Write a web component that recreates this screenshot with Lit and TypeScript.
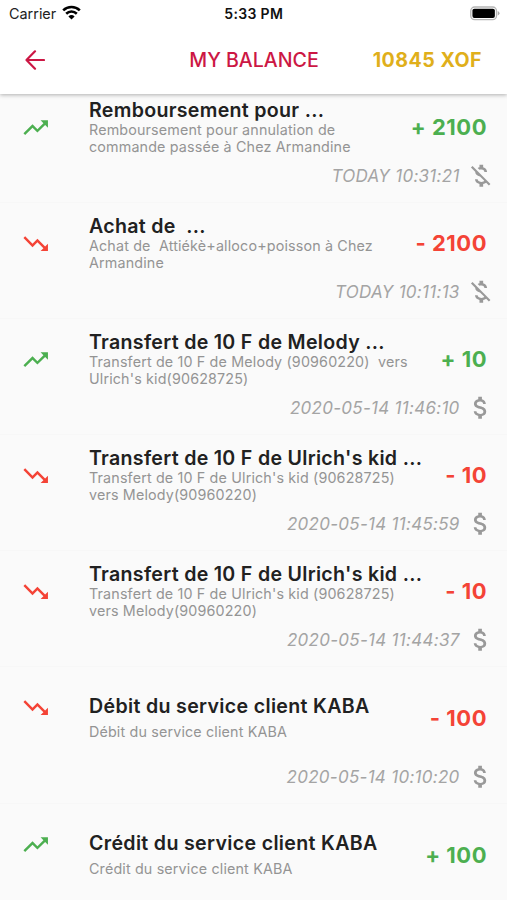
import { LitElement, html, css, svg } from "lit";
import { customElement } from "lit/decorators.js";
import { classMap } from "lit/directives/class-map.js";

interface Transaction {
  title: string;
  lines: string[];
  amount: string;
  credit: boolean;
  date?: string;
  free?: boolean;
  roomy?: boolean;
}

const transactions: Transaction[] = [
  { title: "Remboursement pour ...", lines: ["Remboursement pour annulation de", "commande passée à Chez Armandine"], amount: "+ 2100", credit: true, date: "TODAY 10:31:21", free: true },
  { title: "Achat de  ...", lines: ["Achat de  Attiékè+alloco+poisson à Chez", "Armandine"], amount: "- 2100", credit: false, date: "TODAY 10:11:13", free: true },
  { title: "Transfert de 10 F de Melody ...", lines: ["Transfert de 10 F de Melody (90960220)  vers", "Ulrich's kid(90628725)"], amount: "+ 10", credit: true, date: "2020-05-14 11:46:10" },
  { title: "Transfert de 10 F de Ulrich's kid ...", lines: ["Transfert de 10 F de Ulrich's kid (90628725)", "vers Melody(90960220)"], amount: "- 10", credit: false, date: "2020-05-14 11:45:59" },
  { title: "Transfert de 10 F de Ulrich's kid ...", lines: ["Transfert de 10 F de Ulrich's kid (90628725)", "vers Melody(90960220)"], amount: "- 10", credit: false, date: "2020-05-14 11:44:37" },
  { title: "Débit du service client KABA", lines: ["Débit du service client KABA"], amount: "- 100", credit: false, date: "2020-05-14 10:10:20", roomy: true },
  { title: "Crédit du service client KABA", lines: ["Crédit du service client KABA"], amount: "+ 100", credit: true, roomy: true },
];

const trendUp = svg`<path d="M16 6l2.29 2.29-4.88 4.88-4-4L2 16.59 3.41 18l6-6 4 4 6.3-6.29L22 12V6z"/>`;
const trendDown = svg`<path d="M16 18l2.29-2.29-4.88-4.88-4 4L2 7.41 3.41 6l6 6 4-4 6.3 6.29L22 12v6z"/>`;
const money = svg`<path d="M11.8 10.9c-2.27-.59-3-1.2-3-2.15 0-1.09 1.01-1.85 2.7-1.85 1.78 0 2.44.85 2.5 2.1h2.21c-.07-1.72-1.12-3.3-3.21-3.81V3h-3v2.16c-1.94.42-3.5 1.68-3.5 3.61 0 2.31 1.91 3.46 4.7 4.13 2.5.6 3 1.48 3 2.41 0 .69-.49 1.79-2.7 1.79-2.06 0-2.87-.92-2.98-2.1h-2.2c.12 2.19 1.76 3.42 3.68 3.83V21h3v-2.15c1.95-.37 3.5-1.5 3.5-3.55 0-2.84-2.43-3.81-4.7-4.4z"/>`;
const moneyOff = svg`<path d="M12.5 6.9c1.78 0 2.44.85 2.5 2.1h2.21c-.07-1.72-1.12-3.3-3.21-3.81V3h-3v2.16c-.53.12-1.03.3-1.48.54l1.47 1.47c.41-.17.91-.27 1.51-.27zM5.33 4.06L4.06 5.33 7.5 8.77c0 2.08 1.56 3.21 3.91 3.91l3.51 3.51c-.34.48-1.05.91-2.42.91-2.06 0-2.87-.92-2.98-2.1h-2.2c.12 2.19 1.76 3.42 3.68 3.83V21h3v-2.15c.96-.18 1.82-.55 2.45-1.12l2.22 2.22 1.27-1.27L5.33 4.06z"/>`;

@customElement("transaction-row")
export class TransactionRow extends LitElement {
  static properties = { item: { attribute: false } };
  declare item: Transaction;

  static styles = css`
    :host { display: block; border-bottom: 1px solid #f7f7f7; }
    .row { box-sizing: border-box; height: 115px; padding: 12px 16px 0 20.8px; display: grid;
      grid-template-columns: 68.2px 1fr auto; grid-template-rows: 61.5px 30px; }
    .roomy { height: 136px; grid-template-rows: 82.5px 30px; }
    .icon { width: 29.4px; height: 29.4px; display: block; fill: #999; }
    .trend { margin-top: 14.2px; }
    .up { fill: #4caf50; }
    .down { fill: #f44336; }
    .title { font-size: 19.6px; font-weight: 600; line-height: 22px; letter-spacing: .3px; color: #212121; white-space: pre; margin-top: -.5px; }
    .desc { font-size: 14.3px; line-height: 17px; letter-spacing: .16px; color: #949494; white-space: pre; }
    .roomy .title { margin-top: 16px; letter-spacing: .33px; }
    .roomy .desc { margin-top: 5.5px; }
    .amount { font-size: 22px; font-weight: 700; line-height: 26px; margin: 15.4px 4px 0 0; letter-spacing: .5px; }
    .roomy .amount { margin-top: 26px; }
    .amount.up { color: #4caf50; }
    .amount.down { color: #f44336; }
    .when { grid-column: 1 / 4; display: flex; justify-content: flex-end; align-items: center; gap: 6px; height: 30px;
      font-size: 17px; font-style: italic; letter-spacing: .28px; color: #a4a4a4; }
    .info { display: flow-root; min-width: 0; }
    .when .icon { margin-right: -4px; }
  `;

  render() {
    const t = this.item;
    const dir = { up: t.credit, down: !t.credit };
    return html`
      <div class=${classMap({ row: true, roomy: !!t.roomy })}>
        <svg class=${classMap({ icon: true, trend: true, ...dir })} viewBox="0 0 24 24">${t.credit ? trendUp : trendDown}</svg>
        <div class="info">
          <div class="title">${t.title}</div>
          <div class="desc">${t.lines.join("\n")}</div>
        </div>
        <div class=${classMap({ amount: true, ...dir })}>${t.amount}</div>
        ${t.date ? html`<div class="when"><span>${t.date}</span><svg class="icon" viewBox="0 0 24 24">${t.free ? moneyOff : money}</svg></div>` : ""}
      </div>`;
  }
}

@customElement("app-root")
export class AppRoot extends LitElement {
  static styles = css`
    :host { display: block; height: 900px; overflow: hidden; background: #fafafa; font-family: Inter, "Liberation Sans", sans-serif; }
    header { position: relative; z-index: 1; height: 93.5px; background: #fff; box-shadow: 0 1px 4px rgba(0,0,0,.3); }
    .status { display: grid; grid-template-columns: 1fr auto 1fr; align-items: center; height: 27px; padding: 0 7px 0 9px; font-size: 14.4px; color: #222; }
    .carrier { display: flex; align-items: center; gap: 5.5px; }
    .wifi { width: 19px; height: 15px; margin-top: -2px; }
    .time { font-weight: 600; color: #111; font-size: 14px; letter-spacing: .35px; margin-left: -1.5px; }
    .battery { justify-self: end; width: 30px; height: 15px; margin-top: -1px; }
    .bar { display: grid; grid-template-columns: 1fr auto 1fr; align-items: center; height: 65px; padding: 0 25px; font-size: 19.6px; }
    .back { width: 20px; height: 20px; fill: none; stroke: #cc1744; stroke-width: 2.2; stroke-linecap: round; stroke-linejoin: round; }
    .heading { color: #cc1744; font-weight: 450; letter-spacing: 0; margin-left: 1px; }
    .balance { justify-self: end; color: #e0af1b; font-weight: 700; letter-spacing: .5px; }
    .list { margin-top: -6.5px; }
  `;

  render() {
    return html`
      <header>
        <div class="status">
          <div class="carrier"><span>Carrier</span>
            <svg class="wifi" viewBox="0 0 19 15"><g fill="none" stroke="#000" stroke-width="2.6"><path d="M1.2 5.4a12 12 0 0 1 16.6 0"/><path d="M4.2 8.7a7.6 7.6 0 0 1 10.6 0"/></g><path d="M9.5 14.6L6.4 11.4a4.5 4.5 0 0 1 6.2 0z"/></svg>
          </div>
          <span class="time">5:33 PM</span>
          <svg class="battery" viewBox="0 0 31 15"><rect x=".8" y=".8" width="26.6" height="13" rx="4" fill="#fff" stroke="#b5b5b5" stroke-width="1.4"/><rect x="2.5" y="2.5" width="23.2" height="9.6" rx="2"/><path d="M28.7 5v4.6q1.8-.8 1.8-2.3t-1.8-2.3" fill="#aaa"/></svg>
        </div>
        <div class="bar">
          <svg class="back" viewBox="0 0 20 20"><path d="M19 10H1.5M10 1.3L1.5 10L10 18.7"/></svg>
          <span class="heading">MY BALANCE</span>
          <span class="balance">10845 XOF</span>
        </div>
      </header>
      <div class="list">${transactions.map((t) => html`<transaction-row .item=${t}></transaction-row>`)}</div>`;
  }
}
